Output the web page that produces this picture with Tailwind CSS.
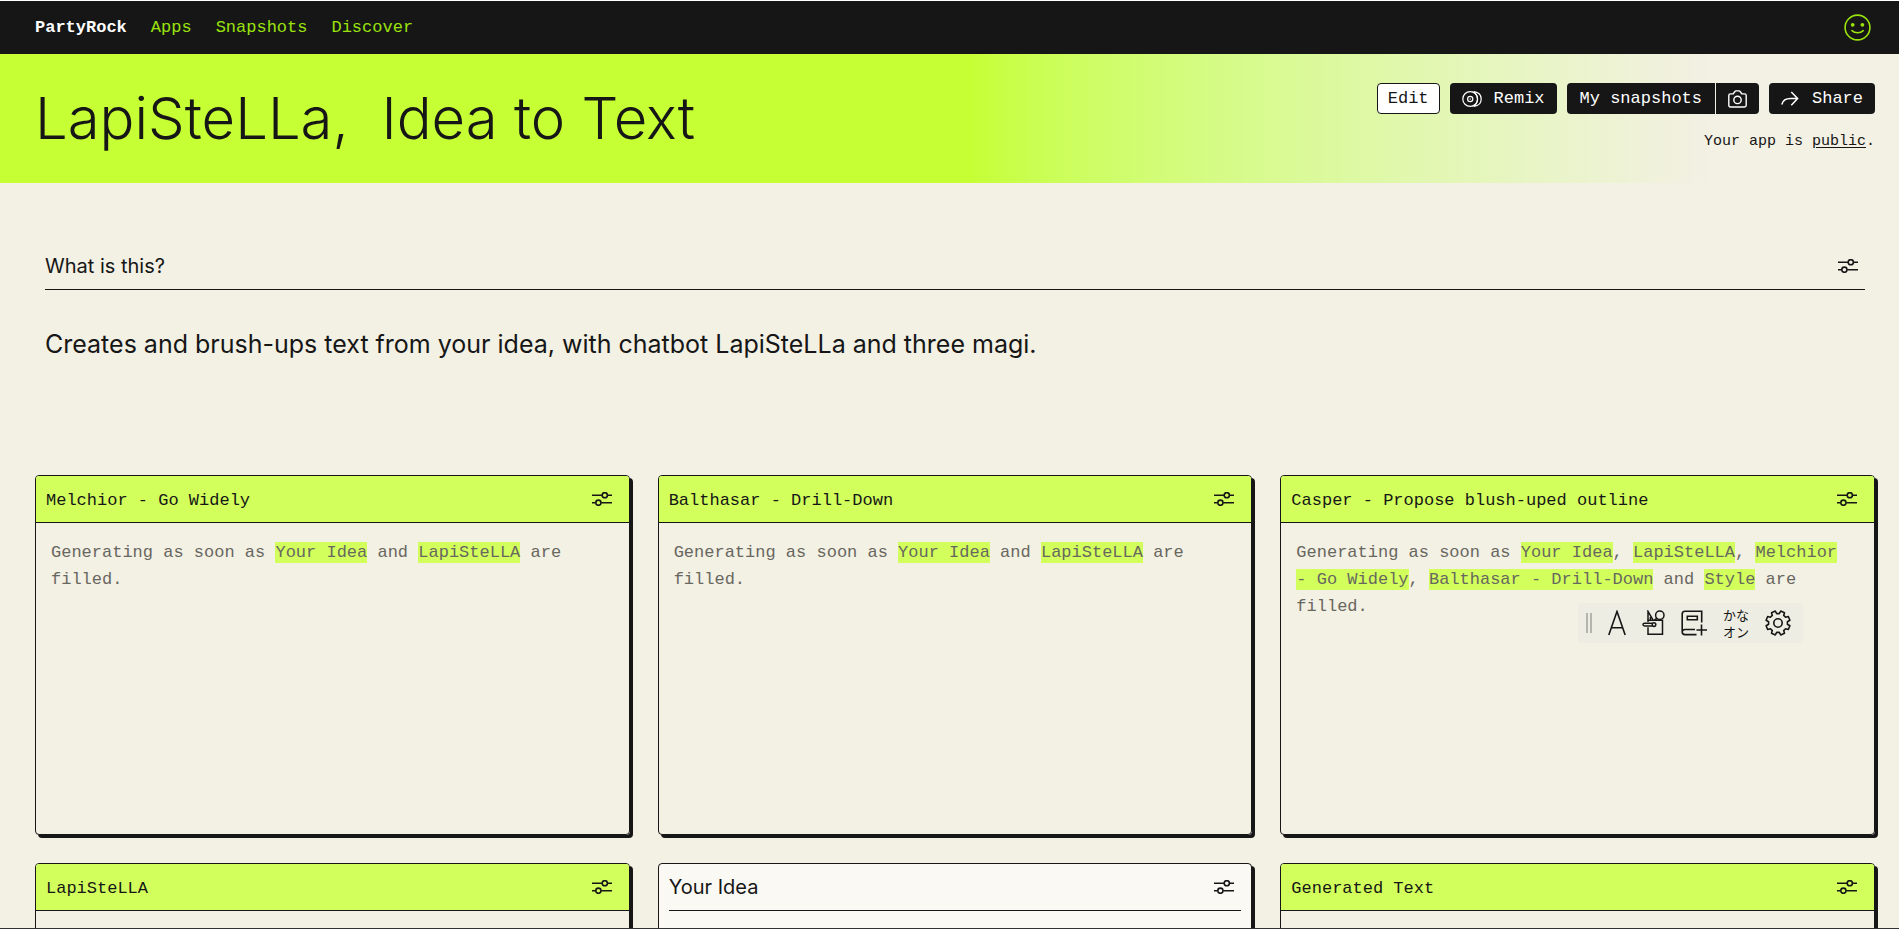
<!DOCTYPE html>
<html lang="en">
<head>
    <meta charset="UTF-8">
    <meta name="viewport" content="width=device-width, initial-scale=1.0">
    <title>LapiSteLLa, Idea to Text - PartyRock</title>
    <script src="https://cdn.jsdelivr.net/npm/@tailwindcss/browser@4"></script>
</head>
<body class="h-screen flex flex-col overflow-hidden border-t border-t-white border-b border-b-[#333] bg-[#f3f0e4] text-[#161616] text-[17px] font-['Liberation_Mono',monospace]">

    <!-- Shared icons -->
    <svg class="hidden">
        <symbol id="sliders" viewBox="0 0 20 14">
            <g fill="none" stroke="currentColor" stroke-width="1.6">
                <path d="M0 3.2h10M15.6 3.2H20M0 10.7h3.6M9.2 10.7H20"/>
                <circle cx="12.8" cy="3.2" r="2.6"/>
                <circle cx="6.4" cy="10.7" r="2.6"/>
            </g>
        </symbol>
    </svg>

    <!-- Navbar -->
    <nav class="shrink-0 h-[53px] flex items-center gap-6 pl-[35px] pr-7 bg-[#161616] text-[#9ae20e]">
        <a href="#" class="font-bold text-white">PartyRock</a>
        <a href="#">Apps</a>
        <a href="#">Snapshots</a>
        <a href="#">Discover</a>
        <button class="ml-auto" aria-label="Account">
            <svg class="w-[27px] h-[27px]" viewBox="0 0 27 27" fill="none" stroke="currentColor" stroke-width="1.6">
                <circle cx="13.5" cy="13.5" r="12.4"/>
                <circle cx="8.7" cy="10.8" r="1.9" fill="currentColor" stroke="none"/>
                <circle cx="18.4" cy="10.8" r="1.9" fill="currentColor" stroke="none"/>
                <path d="M8 16.6c2.6 2.8 8.6 2.8 11.2 0" stroke-linecap="round"/>
            </svg>
        </button>
    </nav>

    <!-- App Header -->
    <header class="shrink-0 h-[129px] flex items-start justify-between pl-[35px] pr-6 bg-linear-to-r from-[#c6ff33] from-[51%] to-[#f3f0e4] to-90%">
        <h1 class="pt-7 text-[58px] leading-[72px] font-light whitespace-pre font-['Inter',sans-serif]">LapiSteLLa,  Idea to Text</h1>
        <div class="pt-[29px] flex flex-col items-end">
            <div class="flex gap-[10px]">
                <button class="h-[31px] px-[10px] pt-px rounded border border-[#161616] bg-white">Edit</button>
                <button class="h-[31px] px-3 pt-px flex items-center gap-3 rounded bg-[#161616] text-white">
                    <svg class="w-5 h-[18px]" viewBox="0 0 20 18" fill="none" stroke="currentColor" stroke-width="1.2">
                        <circle cx="8.2" cy="9" r="7.4"/>
                        <circle cx="8.2" cy="9" r="2.6"/>
                        <circle cx="8.2" cy="9" r=".7" fill="currentColor" stroke="none"/>
                        <path d="M10.5 1.7c3 1.1 5 3.9 5 7.3s-2 6.2-5 7.3M12 1.6c4.6.6 7.2 3.400 7.200 7.400s-2.600 6.800-7.200 7.400"/>
                    </svg>
                    Remix
                </button>
                <div class="flex gap-px">
                    <button class="h-[31px] px-[13px] pt-px rounded-l bg-[#161616] text-white">My snapshots</button>
                    <button class="h-[31px] px-3 rounded-r bg-[#161616] text-white" aria-label="Take snapshot">
                        <svg class="w-[19px] h-[18px]" viewBox="0 0 19 18" fill="none" stroke="currentColor" stroke-width="1.4" stroke-linejoin="round">
                            <path d="M.8 15.3V5.6q0-1.7 1.7-1.7h2.7L6.9 1.5q.4-.6 1-.6h3.2q.6 0 1 .6l1.7 2.4h2.7q1.7 0 1.7 1.7v9.7q0 1.7-1.7 1.7h-14q-1.7 0-1.7-1.7z"/>
                            <circle cx="9.5" cy="9.9" r="3.7"/>
                        </svg>
                    </button>
                </div>
                <button class="h-[31px] px-3 pt-px flex items-center gap-[13px] rounded bg-[#161616] text-white">
                    <svg class="w-[18px] h-4" viewBox="0 0 18 16" fill="none" stroke="currentColor" stroke-width="1.5">
                        <path d="M.8 13.5C1.8 9.6 5 7.6 9.5 7.6h6.8M10.3 1l6.3 6.6-6.3 6.6"/>
                    </svg>
                    Share
                </button>
            </div>
            <p class="pt-[18px] text-[15px] leading-5">Your app is <a href="#" class="underline underline-offset-2">public</a>.</p>
        </div>
    </header>

    <main class="flex-1 min-h-0 overflow-hidden">
        <!-- Description -->
        <section class="ml-[45px] mr-[34px] mt-[59px] font-['Inter',sans-serif]">
            <div class="h-12 flex items-center justify-between pr-[7px] border-b border-[#161616]">
                <h2 class="text-[20px]">What is this?</h2>
                <button aria-label="Widget settings"><svg class="w-5 h-[14px]"><use href="#sliders"/></svg></button>
            </div>
            <p class="mt-9 text-[25px] leading-9">Creates and brush-ups text from your idea, with chatbot LapiSteLLa and three magi.</p>
        </section>

        <!-- Widgets -->
        <div class="mt-[113px] pl-[35px] pr-6 grid grid-cols-3 gap-7">
            <article class="h-[360px] overflow-hidden rounded border border-[#161616] shadow-[3px_3px_0_#161616]">
                <header class="h-[47px] flex items-center justify-between pl-[10px] pr-[17px] bg-[#d2ff5c] border-b border-[#161616]">
                    <h3 class="pt-[3px]">Melchior - Go Widely</h3>
                    <button aria-label="Widget settings"><svg class="w-5 h-[14px]"><use href="#sliders"/></svg></button>
                </header>
                <p class="pl-[15px] pt-4 pr-5 leading-[27px] text-[#68675f]">Generating as soon as <mark class="py-px bg-[#d2ff5c] text-inherit">Your Idea</mark> and <mark class="py-px bg-[#d2ff5c] text-inherit">LapiSteLLA</mark> are filled.</p>
            </article>

            <article class="h-[360px] overflow-hidden rounded border border-[#161616] shadow-[3px_3px_0_#161616]">
                <header class="h-[47px] flex items-center justify-between pl-[10px] pr-[17px] bg-[#d2ff5c] border-b border-[#161616]">
                    <h3 class="pt-[3px]">Balthasar - Drill-Down</h3>
                    <button aria-label="Widget settings"><svg class="w-5 h-[14px]"><use href="#sliders"/></svg></button>
                </header>
                <p class="pl-[15px] pt-4 pr-5 leading-[27px] text-[#68675f]">Generating as soon as <mark class="py-px bg-[#d2ff5c] text-inherit">Your Idea</mark> and <mark class="py-px bg-[#d2ff5c] text-inherit">LapiSteLLA</mark> are filled.</p>
            </article>

            <article class="h-[360px] overflow-hidden rounded border border-[#161616] shadow-[3px_3px_0_#161616]">
                <header class="h-[47px] flex items-center justify-between pl-[10px] pr-[17px] bg-[#d2ff5c] border-b border-[#161616]">
                    <h3 class="pt-[3px]">Casper - Propose blush-uped outline</h3>
                    <button aria-label="Widget settings"><svg class="w-5 h-[14px]"><use href="#sliders"/></svg></button>
                </header>
                <p class="pl-[15px] pt-4 pr-5 leading-[27px] text-[#68675f]">Generating as soon as <mark class="py-px bg-[#d2ff5c] text-inherit">Your Idea</mark>, <mark class="py-px bg-[#d2ff5c] text-inherit">LapiSteLLA</mark>, <mark class="py-px bg-[#d2ff5c] text-inherit">Melchior - Go Widely</mark>, <mark class="py-px bg-[#d2ff5c] text-inherit">Balthasar - Drill-Down</mark> and <mark class="py-px bg-[#d2ff5c] text-inherit">Style</mark> are filled.</p>
            </article>

            <article class="h-[360px] overflow-hidden rounded border border-[#161616] shadow-[3px_3px_0_#161616]">
                <header class="h-[47px] flex items-center justify-between pl-[10px] pr-[17px] bg-[#d2ff5c] border-b border-[#161616]">
                    <h3 class="pt-[3px]">LapiSteLLA</h3>
                    <button aria-label="Widget settings"><svg class="w-5 h-[14px]"><use href="#sliders"/></svg></button>
                </header>
            </article>

            <article class="h-[360px] overflow-hidden rounded border border-[#161616] bg-[#faf9f4] shadow-[3px_3px_0_#161616]">
                <header class="h-[47px] mx-[10px] flex items-center justify-between pr-[7px] border-b border-[#161616]">
                    <h3 class="text-[20px] font-['Inter',sans-serif]">Your Idea</h3>
                    <button aria-label="Widget settings"><svg class="w-5 h-[14px]"><use href="#sliders"/></svg></button>
                </header>
            </article>

            <article class="h-[360px] overflow-hidden rounded border border-[#161616] shadow-[3px_3px_0_#161616]">
                <header class="h-[47px] flex items-center justify-between pl-[10px] pr-[17px] bg-[#d2ff5c] border-b border-[#161616]">
                    <h3 class="pt-[3px]">Generated Text</h3>
                    <button aria-label="Widget settings"><svg class="w-5 h-[14px]"><use href="#sliders"/></svg></button>
                </header>
            </article>
        </div>
    </main>

    <!-- Floating input method bar -->
    <div class="fixed top-[603px] right-24 h-10 w-[225px] pl-2 pr-3 flex items-center justify-between bg-[#eeede3]">
        <div class="w-[6px] h-5 border-x-2 border-[#b4b3ac]"></div>
        <button aria-label="Input mode">
            <svg class="w-[18px] h-[26px]" viewBox="0 0 18 26" fill="none" stroke="currentColor" stroke-width="1.6">
                <path d="M.8 25L9 1.5 17.2 25M3.6 17.8h10.8"/>
            </svg>
        </button>
        <button aria-label="Tools">
            <svg class="w-[23px] h-[26px]" viewBox="0 0 23 26" fill="none" stroke="currentColor" stroke-width="1.5">
                <path d="M6 10V1.4l5 8.4M8.4 7v3"/>
                <circle cx="17.8" cy="5.2" r="4.2"/>
                <path d="M12 10.3l3-2.200M6 12V10.300h14.500v14H6V17.300"/>
                <path d="M10.300 13.200H2.600q-1.600 0-1.600 1.400t1.600 1.400h7.700"/>
                <circle cx="12" cy="14.600" r="1.800"/>
            </svg>
        </button>
        <button aria-label="Add word">
            <svg class="w-[26px] h-[26px]" viewBox="0 0 26 26" fill="none" stroke="currentColor" stroke-width="1.6">
                <path d="M20.7 12.5V1.3H4Q1.2 1.3 1.2 4v18q0 2.6 2.8 2.6h11.5M1.2 22q0-2.5 2.8-2.5h10M20.5 14.5v11M15.5 20H26"/>
                <path d="M6.3 6.3h10v3.4h-10z"/>
            </svg>
        </button>
        <button class="w-[26px] text-[13px] leading-[17px] whitespace-nowrap font-['Noto_Sans_CJK_JP',sans-serif]">かな<br>オン</button>
        <button aria-label="Settings">
            <svg class="w-[26px] h-[26px]" viewBox="0 0 26 26" fill="none" stroke="currentColor" stroke-width="1.6" stroke-linejoin="round">
                <path d="M14.3 3.6L15.7 1.1 19.5 2.7 18.7 5.4 20.6 7.3 23.3 6.5 24.9 10.3 22.4 11.7V14.3L24.9 15.7 23.3 19.5 20.6 18.7 18.7 20.6 19.5 23.3 15.7 24.9 14.3 22.4H11.7L10.3 24.9 6.5 23.3 7.3 20.6 5.4 18.7 2.7 19.5 1.1 15.7 3.6 14.3V11.7L1.1 10.3 2.7 6.5 5.4 7.3 7.3 5.4 6.5 2.7 10.3 1.1 11.7 3.6z"/>
                <circle cx="13" cy="13" r="4.2"/>
            </svg>
        </button>
    </div>
</body>
</html>
